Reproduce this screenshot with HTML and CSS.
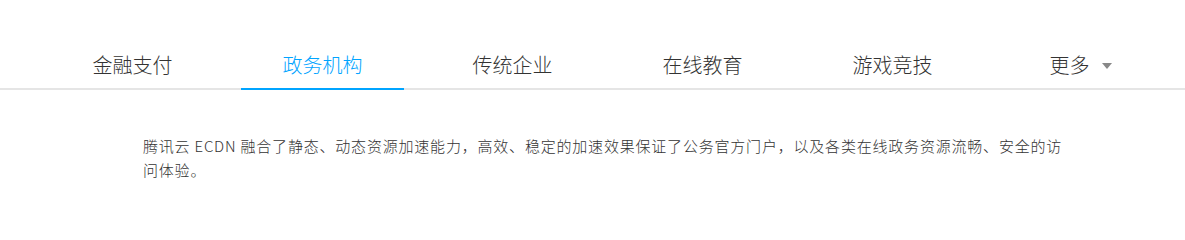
FILE: index.html
```html
<!DOCTYPE html>
<html lang="zh-CN">
<head>
<meta charset="utf-8">
<title>ECDN 行业方案</title>
<link rel="stylesheet" href="styles.css">
</head>
<body>
<nav class="tabs">
  <div class="tab">金融支付</div>
  <div class="tab active">政务机构</div>
  <div class="tab">传统企业</div>
  <div class="tab">在线教育</div>
  <div class="tab">游戏竞技</div>
  <div class="tab more">更多<span class="caret"></span></div>
</nav>
<p class="desc">腾讯云 ECDN 融合了静态、动态资源加速能力，高效、稳定的加速效果保证了公务官方门户，以及各类在线政务资源流畅、安全的访问体验。</p>
</body>
</html>
```
FILE: styles.css
```css
html, body {
  margin: 0;
  padding: 0;
  background: #fff;
}
body {
  font-family: "Noto Sans CJK SC", "Noto Sans", sans-serif;
  color: #333;
}
.tabs {
  display: flex;
  align-items: flex-end;
  gap: 27px;
  height: 88px;
  padding-left: 51px;
  border-bottom: 2px solid #e5e5e5;
  box-sizing: content-box;
}
.tab {
  position: relative;
  width: 163px;
  flex: 0 0 163px;
  display: flex;
  justify-content: center;
  align-items: center;
  font-size: 20px;
  font-weight: 300;
  line-height: 30px;
  padding-bottom: 8px;
  color: #333;
}
.tab.more {
  padding-right: 4px;
  box-sizing: border-box;
}
.tab.active {
  color: #00a4ff;
}
.tab.active::after {
  content: "";
  position: absolute;
  left: 0;
  right: 0;
  bottom: -2px;
  height: 2px;
  background: #00a4ff;
}
.caret {
  display: inline-block;
  width: 0;
  height: 0;
  margin-left: 12px;
  margin-top: 2px;
  border-left: 5px solid transparent;
  border-right: 5px solid transparent;
  border-top: 6px solid #888;
}
.desc {
  margin: 44px 0 0 143px;
  width: 925px;
  font-size: 15px;
  font-weight: 300;
  letter-spacing: 0.8px;
  line-height: 24px;
  color: #333;
}
```
